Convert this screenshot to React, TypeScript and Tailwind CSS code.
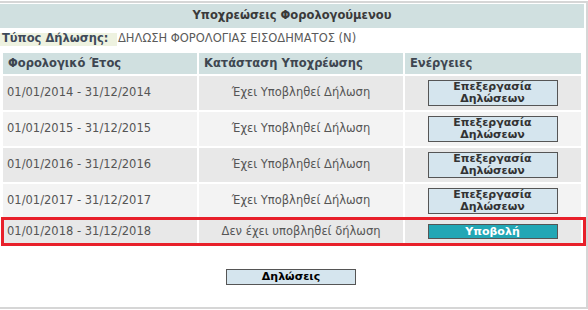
import React from "react";

const font = { fontFamily: '"DejaVu Sans", Verdana, sans-serif' };

function EditButton() {
  return (
    <button className="w-[130px] h-[26px] border border-[#555] bg-[#d5e5ee] text-[#333] font-bold text-[11px] leading-[12px] flex flex-col items-center justify-center">
      <span>Επεξεργασία</span>
      <span>Δηλώσεων</span>
    </button>
  );
}

const rows = [
  { period: "01/01/2014 - 31/12/2014", status: "Έχει Υποβληθεί Δήλωση" },
  { period: "01/01/2015 - 31/12/2015", status: "Έχει Υποβληθεί Δήλωση" },
  { period: "01/01/2016 - 31/12/2016", status: "Έχει Υποβληθεί Δήλωση" },
  { period: "01/01/2017 - 31/12/2017", status: "Έχει Υποβληθεί Δήλωση" },
];

export default function App() {
  return (
    <div className="w-[588px] h-[310px] bg-white pt-px" style={font}>
      <div className="relative w-[588px] h-[308px] border-t-2 border-r-2 border-b-2 border-[#d6d6d6] pr-[1px] pt-px">
        <div className="h-[24px] w-[584px] bg-[#d0e0e0] flex items-center justify-center text-[11.5px] font-bold text-[#3a3a3a]">
          Υποχρεώσεις Φορολογούμενου
        </div>
        <div className="flex items-center h-[22px] text-[11.5px]">
          <div className="w-[117px] h-[13px] bg-[#eef2e0] font-bold text-[#3e4a5a] flex items-center pl-[2px]">
            Τύπος Δήλωσης:
          </div>
          <div className="text-[#5a5a5a] pl-px">ΔΗΛΩΣΗ ΦΟΡΟΛΟΓΙΑΣ ΕΙΣΟΔΗΜΑΤΟΣ (Ν)</div>
        </div>
        <div className="mt-[3px] ml-[3px] grid grid-cols-[194px_204px_176px] gap-[2px] text-[11.5px]">
          <div className="h-[21px] bg-[#d0e0e0] font-bold text-[#3e4650] flex items-center pl-[5px]">Φορολογικό Έτος</div>
          <div className="h-[21px] bg-[#d0e0e0] font-bold text-[#3e4650] flex items-center pl-[5px]">Κατάσταση Υποχρέωσης</div>
          <div className="h-[21px] bg-[#d0e0e0] font-bold text-[#3e4650] flex items-center pl-[5px]">Ενέργειες</div>
          {rows.map((r, i) => {
            const bg = i % 2 === 0 ? "bg-[#e8e8e8]" : "bg-[#f3f3f3]";
            return (
              <React.Fragment key={r.period}>
                <div className={`h-[34px] ${bg} text-[#555] flex items-center pl-[4px]`}>{r.period}</div>
                <div className={`h-[34px] ${bg} text-[#555] flex items-center justify-center`}>{r.status}</div>
                <div className={`h-[34px] ${bg} flex items-center justify-center pr-[1px]`}>
                  <EditButton />
                </div>
              </React.Fragment>
            );
          })}
          <div className="h-[23px] bg-[#e8e8e8] text-[#555] flex items-center pl-[4px]">01/01/2018 - 31/12/2018</div>
          <div className="h-[23px] bg-[#e8e8e8] text-[#555] flex items-center justify-center">Δεν έχει υποβληθεί δήλωση</div>
          <div className="h-[23px] bg-[#e8e8e8] flex items-center justify-center pr-[1px]">
            <button className="w-[130px] h-[15px] border border-[#555] bg-[#22a7b5] text-white font-bold text-[11px] leading-[12px] flex items-center justify-center">
              Υποβολή
            </button>
          </div>
        </div>
        <div className="flex justify-center mt-[26px] pr-[3px]">
          <button className="w-[130px] h-[16px] border border-[#555] bg-[#d5e5ee] text-black font-bold text-[11px] leading-[12px] flex items-center justify-center">
            Δηλώσεις
          </button>
        </div>
        <div className="absolute left-[1px] top-[214px] w-[585px] h-[29px] border-[3px] border-[#e8202a] pointer-events-none" />
      </div>
    </div>
  );
}
